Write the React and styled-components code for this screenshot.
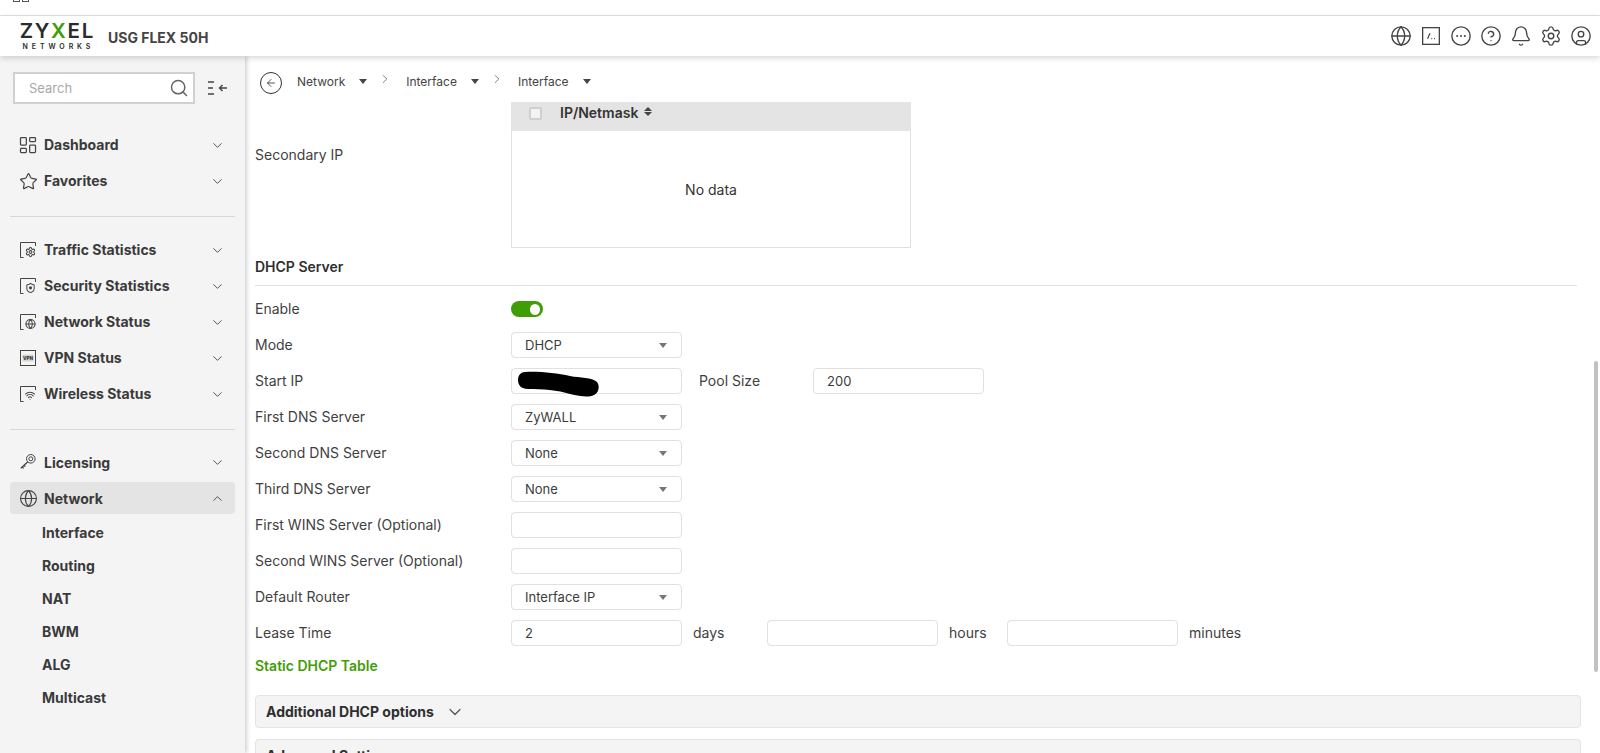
import React from "react";
import styled, { createGlobalStyle } from "styled-components";
import {
  Globe, CircleHelp, Bell, Settings, CircleUser, Search, LayoutDashboard, Star,
  ChevronDown, ChevronUp, ChevronRight, Shield, Wifi, ArrowLeft,
} from "lucide-react";

const GlobalStyle = createGlobalStyle`
  html, body { margin: 0; padding: 0; height: 100%; overflow: hidden; }
  body { font-family: Inter, "Liberation Sans", sans-serif; background: #fff; color: #3c3c3c; }
`;

const Page = styled.div`
  width: 1600px;
  height: 753px;
  display: flex;
  flex-direction: column;
  overflow: hidden;
`;

const TopStrip = styled.div`
  height: 15px;
  flex: none;
  display: flex;
  gap: 2px;
  padding-left: 13px;
  border-bottom: 1px solid #e3e3e3;
`;

const StripMark = styled.span`
  width: 5px;
  height: 1px;
  border: 1px solid #555;
  border-top: none;
`;

const Header = styled.header`
  height: 40px;
  flex: none;
  display: flex;
  align-items: center;
  justify-content: space-between;
  padding: 0 8px 0 20px;
  background: #fff;
  box-shadow: 0 2px 6px rgba(0, 0, 0, 0.16);
  position: relative;
  z-index: 2;
`;

const Brand = styled.div`
  display: flex;
  align-items: center;
  gap: 15px;
`;

const Logo = styled.div`
  width: 73px;
  display: flex;
  flex-direction: column;
  align-items: center;
`;

const LogoWord = styled.div`
  font-size: 20.5px;
  line-height: 18px;
  font-weight: 600;
  letter-spacing: 1.7px;
  color: #2b2b2b;
  margin-right: -1.7px;
  span { color: #3f9e06; }
`;

const LogoSub = styled.div`
  font-size: 7px;
  line-height: 8px;
  font-weight: 600;
  letter-spacing: 3.9px;
  color: #2b2b2b;
  margin-top: 3px;
  margin-bottom: -1px;
  margin-right: -3.9px;
`;

const ModelName = styled.div`
  font-size: 14px;
  font-weight: 700;
  color: #444;
  margin-top: 3px;
`;

const HeaderIcons = styled.div`
  display: flex;
  align-items: center;
  gap: 8px;
  color: #444;
`;

const Body = styled.div`
  flex: 1;
  min-height: 0;
  display: flex;
`;

const Sidebar = styled.aside`
  width: 245px;
  flex: none;
  background: #f4f4f4;
  box-shadow: 2px 0 4px rgba(0, 0, 0, 0.18);
  padding: 16px 10px 0;
  box-sizing: border-box;
  position: relative;
  z-index: 1;
`;

const SearchRow = styled.div`
  display: flex;
  align-items: center;
  gap: 13px;
  padding-left: 3px;
  margin-bottom: 25px;
  color: #444;
`;

const SearchBox = styled.div`
  width: 182px;
  height: 32px;
  box-sizing: border-box;
  border: 2px solid #d0d0d0;
  background: #fff;
  display: flex;
  align-items: center;
  justify-content: space-between;
  padding: 0 4px 0 14px;
  font-size: 13px;
  color: #a8a8a8;
`;

const NavGroup = styled.div`
  display: flex;
  flex-direction: column;
  gap: 4px;
`;

const NavRow = styled.div`
  height: 32px;
  display: flex;
  align-items: center;
  gap: 8px;
  padding: 0 10px;
  border-radius: 4px;
  font-size: 14px;
  font-weight: 700;
  color: #3a3a3a;
  background: ${(p) => (p.$active ? "#e4e4e4" : "transparent")};
  svg.chev { margin-left: auto; color: #555; }
`;

const NavIcon = styled.span`
  width: 16px;
  height: 16px;
  flex: none;
  display: flex;
  align-items: center;
  justify-content: center;
  color: #444;
  svg { flex: none; }
`;

const NavLabel = styled.span`
  line-height: 18px;
  margin-top: ${(p) => (p.$drop ? 2 : 0)}px;
`;

const Divider = styled.hr`
  margin: 19px 0 ${(p) => p.$after}px;
  border: none;
  border-top: 1px solid #d8d8d8;
`;

const SubList = styled.div`
  display: flex;
  flex-direction: column;
  margin-top: 2px;
`;

const SubItem = styled.div`
  height: 33px;
  line-height: 33px;
  padding-left: 32px;
  font-size: 14px;
  font-weight: 700;
  color: #3a3a3a;
`;

const Main = styled.main`
  flex: 1;
  min-width: 0;
  position: relative;
  display: flex;
  flex-direction: column;
  padding-left: 10px;
`;

const Crumbs = styled.div`
  height: 46px;
  flex: none;
  box-sizing: border-box;
  display: flex;
  align-items: center;
  padding: 5px 0 0 5px;
  font-size: 12px;
  color: #444;
`;

const BackButton = styled.div`
  width: 22px;
  height: 22px;
  box-sizing: border-box;
  border: 1px solid #333;
  border-radius: 50%;
  display: flex;
  align-items: center;
  justify-content: center;
  margin-right: 15px;
  margin-top: 2px;
`;

const Crumb = styled.div`
  display: flex;
  align-items: center;
  gap: 14px;
`;

const CrumbSep = styled.div`
  display: flex;
  width: 39px;
  box-sizing: border-box;
  padding-left: 11px;
  color: #555;
  margin-top: -6px;
`;

const Caret = styled.span`
  width: 0;
  height: 0;
  border-left: 4px solid transparent;
  border-right: 4px solid transparent;
  border-top: 5px solid ${(p) => p.$color || "#444"};
`;

const Scroll = styled.div`
  flex: 1;
  min-height: 0;
  overflow: hidden;
  padding-right: 19px;
`;

const Row = styled.div`
  display: flex;
  align-items: center;
  height: 26px;
  margin-bottom: 10px;
`;

const TableRow = styled.div`
  display: flex;
  align-items: flex-start;
`;

const Label = styled.div`
  width: 256px;
  flex: none;
  font-size: 14px;
  line-height: 18px;
  color: #3f3f3f;
  margin-top: ${(p) => p.$top || 0}px;
`;

const TableBox = styled.div`
  width: 400px;
  box-sizing: border-box;
`;

const TableHead = styled.div`
  height: 29px;
  background: #e4e4e4;
  display: flex;
  align-items: flex-start;
  padding: 5px 0 0 18px;
  box-sizing: border-box;
  font-size: 14px;
  font-weight: 600;
  line-height: 11px;
  color: #333;
`;

const Check = styled.span`
  width: 13px;
  height: 13px;
  box-sizing: border-box;
  border: 2px solid #cfcfcf;
  border-radius: 2px;
  background: #f3f3f3;
  margin-right: 18px;
`;

const SortMark = styled.span`
  display: flex;
  flex-direction: column;
  gap: 1px;
  margin-left: 6px;
  &::before, &::after {
    content: "";
    border-left: 4px solid transparent;
    border-right: 4px solid transparent;
  }
  &::before { border-bottom: 4px solid #444; }
  &::after { border-top: 4px solid #444; }
`;

const TableEmpty = styled.div`
  height: 117px;
  box-sizing: border-box;
  border: 1px solid #e0e0e0;
  border-top: none;
  display: flex;
  align-items: center;
  justify-content: center;
  font-size: 14px;
  color: #333;
`;

const SectionTitle = styled.div`
  font-size: 14px;
  font-weight: 600;
  line-height: 18px;
  color: #2f2f2f;
  margin-top: 10px;
  padding-bottom: 9px;
  border-bottom: 1px solid #e0e0e0;
  margin-bottom: 10px;
  margin-right: 4px;
`;

const Toggle = styled.span`
  width: 32px;
  height: 16px;
  border-radius: 8px;
  background: #3f9e06;
  display: flex;
  align-items: center;
  justify-content: flex-end;
  padding-right: 3px;
  box-sizing: border-box;
  &::after {
    content: "";
    width: 10px;
    height: 11px;
    border-radius: 50%;
    background: #fff;
  }
`;

const Field = styled.div`
  width: 171px;
  height: 26px;
  flex: none;
  box-sizing: border-box;
  border: 1px solid #e0e0e0;
  border-radius: 4px;
  background: #fff;
  display: flex;
  align-items: center;
  justify-content: space-between;
  padding: 0 14px 0 13px;
  font-size: 13px;
  color: #3c3c3c;
  position: relative;
`;

const Scribble = styled.svg`
  position: absolute;
  left: 6px;
  top: 2px;
`;

const Suffix = styled.span`
  font-size: 14px;
  line-height: 18px;
  color: #3f3f3f;
  width: ${(p) => p.$width}px;
  padding-left: ${(p) => p.$pad || 11}px;
  box-sizing: border-box;
  flex: none;
`;

const GreenLink = styled.div`
  font-size: 14px;
  font-weight: 600;
  line-height: 18px;
  color: #3f9e06;
  padding-top: 1px;
  margin-bottom: 20px;
`;

const Panel = styled.div`
  height: 33px;
  box-sizing: border-box;
  border: 1px solid #e4e4e4;
  border-radius: 4px;
  background: #f4f4f4;
  display: flex;
  align-items: center;
  gap: 11px;
  padding-left: 10px;
  font-size: 14px;
  font-weight: 700;
  color: #2f2f2f;
  margin-bottom: 11px;
`;

const ScrollThumb = styled.div`
  position: absolute;
  right: 2px;
  top: 305px;
  width: 4px;
  height: 311px;
  border-radius: 2px;
  background: #c1c1c1;
`;

// small framed icon used by the status entries, a corner of the frame stays open for the glyph
function FrameIcon({ children }) {
  return (
    <svg width="16" height="16" viewBox="0 0 16 16" fill="none" stroke="#444" strokeWidth="1">
      <path d="M3.5 15.5H.5V.5h15V4" />
      {children}
    </svg>
  );
}

const ConsoleIcon = () => (
  <svg width="22" height="22" viewBox="0 0 22 22" fill="none" stroke="#444">
    <rect x="2.65" y="2.65" width="16.7" height="16.7" strokeWidth="1.3" />
    <path d="M7.6 13.8 10 8.2" strokeWidth="1.2" />
    <path d="M11.3 13.6h.9M14 13.6h.9" strokeWidth="1.2" />
  </svg>
);

const DotsIcon = () => (
  <svg width="22" height="22" viewBox="0 0 24 24" fill="none" stroke="#444" strokeWidth="1.5">
    <circle cx="12" cy="12" r="10" />
    <circle cx="7.8" cy="12" r="1.1" fill="#444" stroke="none" />
    <circle cx="12" cy="12" r="1.1" fill="#444" stroke="none" />
    <circle cx="16.2" cy="12" r="1.1" fill="#444" stroke="none" />
  </svg>
);

const CollapseIcon = () => (
  <svg width="20" height="16" viewBox="0 0 20 16" fill="none" stroke="#444" strokeWidth="1.4">
    <path d="M0 2h6M0 8h5M0 14h6" />
    <path d="M19 8h-7.5M14.5 5l-3 3 3 3" />
  </svg>
);

const KeyIcon = () => (
  <svg width="16" height="16" viewBox="0 0 16 16" fill="none" stroke="#444" strokeWidth="1">
    <circle cx="10.8" cy="4.8" r="4.3" />
    <circle cx="10.8" cy="4.8" r="2" />
    <path d="M7.6 8 .8 14.2M2.2 12.9l1.5 1.5M4 11.3l1.3 1.3" strokeWidth="1.3" />
  </svg>
);

const VpnIcon = () => (
  <svg width="16" height="16" viewBox="0 0 16 16" fill="none">
    <rect x=".5" y=".5" width="15" height="15" stroke="#444" />
    <rect x="2.5" y="4.5" width="11" height="7" fill="#d6d6d6" />
    <text x="8" y="9.8" textAnchor="middle" fontSize="4.6" fontWeight="800" fill="#333" fontFamily="Inter, sans-serif">VPN</text>
  </svg>
);

const inner = { strokeWidth: 2.2 };
const head = { size: 22, strokeWidth: 1.5 };

const topNav = [
  { label: "Dashboard", icon: <LayoutDashboard size={20} strokeWidth={1.5} /> },
  { label: "Favorites", icon: <Star size={19} strokeWidth={1.5} /> },
];

const statusNav = [
  { label: "Traffic Statistics", icon: <FrameIcon><Settings x="5" y="4.5" width="11" height="11" {...inner} /></FrameIcon> },
  { label: "Security Statistics", icon: <FrameIcon><Shield x="5" y="4.5" width="11" height="11" {...inner} /><circle cx="10.5" cy="9.8" r="1.6" fill="#444" stroke="none" /></FrameIcon> },
  { label: "Network Status", icon: <FrameIcon><Globe x="5" y="4.5" width="11" height="11" {...inner} /></FrameIcon> },
  { label: "VPN Status", icon: <VpnIcon /> },
  { label: "Wireless Status", icon: <FrameIcon><Wifi x="4.5" y="4" width="11" height="11" {...inner} /></FrameIcon> },
];

const subItems = ["Interface", "Routing", "NAT", "BWM", "ALG", "Multicast"];

const dhcpRows = [
  { label: "First DNS Server", value: "ZyWALL" },
  { label: "Second DNS Server", value: "None" },
  { label: "Third DNS Server", value: "None" },
  { label: "First WINS Server (Optional)" },
  { label: "Second WINS Server (Optional)" },
  { label: "Default Router", value: "Interface IP" },
];

function NavItem({ item, active, drop }) {
  return (
    <NavRow $active={active}>
      <NavIcon>{item.icon}</NavIcon>
      <NavLabel $drop={drop}>{item.label}</NavLabel>
      {active
        ? <ChevronUp className="chev" size={15} strokeWidth={1.6} />
        : <ChevronDown className="chev" size={15} strokeWidth={1.6} />}
    </NavRow>
  );
}

function CrumbItem({ children }) {
  return (
    <Crumb>
      {children}
      <Caret />
    </Crumb>
  );
}

function SelectField({ value }) {
  return (
    <Field>
      {value}
      <Caret $color="#777" />
    </Field>
  );
}

export default function App() {
  return (
    <Page>
      <GlobalStyle />
      <TopStrip>
        <StripMark />
        <StripMark />
      </TopStrip>
      <Header>
        <Brand>
          <Logo>
            <LogoWord>ZY<span>X</span>EL</LogoWord>
            <LogoSub>NETWORKS</LogoSub>
          </Logo>
          <ModelName>USG FLEX 50H</ModelName>
        </Brand>
        <HeaderIcons>
          <Globe {...head} />
          <ConsoleIcon />
          <DotsIcon />
          <CircleHelp {...head} />
          <Bell {...head} />
          <Settings {...head} />
          <CircleUser {...head} />
        </HeaderIcons>
      </Header>
      <Body>
        <Sidebar>
          <SearchRow>
            <SearchBox>
              Search
              <Search size={20} strokeWidth={1.8} color="#666" />
            </SearchBox>
            <CollapseIcon />
          </SearchRow>
          <NavGroup>
            {topNav.map((item) => <NavItem key={item.label} item={item} />)}
          </NavGroup>
          <Divider $after={17} />
          <NavGroup>
            {statusNav.map((item) => <NavItem key={item.label} item={item} />)}
          </NavGroup>
          <Divider $after={16} />
          <NavGroup>
            <NavItem drop item={{ label: "Licensing", icon: <KeyIcon /> }} />
            <NavItem drop active item={{ label: "Network", icon: <Globe size={19} strokeWidth={1.4} /> }} />
          </NavGroup>
          <SubList>
            {subItems.map((name) => <SubItem key={name}>{name}</SubItem>)}
          </SubList>
        </Sidebar>
        <Main>
          <Crumbs>
            <BackButton><ArrowLeft size={12} strokeWidth={1.8} /></BackButton>
            <CrumbItem>Network</CrumbItem>
            <CrumbSep><ChevronRight size={14} strokeWidth={1.3} /></CrumbSep>
            <CrumbItem>Interface</CrumbItem>
            <CrumbSep><ChevronRight size={14} strokeWidth={1.3} /></CrumbSep>
            <CrumbItem>Interface</CrumbItem>
          </Crumbs>
          <Scroll>
            <TableRow>
              <Label $top={44}>Secondary IP</Label>
              <TableBox>
                <TableHead>
                  <Check />
                  IP/Netmask
                  <SortMark />
                </TableHead>
                <TableEmpty>No data</TableEmpty>
              </TableBox>
            </TableRow>
            <SectionTitle>DHCP Server</SectionTitle>
            <Row>
              <Label>Enable</Label>
              <Toggle />
            </Row>
            <Row>
              <Label>Mode</Label>
              <SelectField value="DHCP" />
            </Row>
            <Row>
              <Label>Start IP</Label>
              <Field>
                <Scribble width="82" height="26" viewBox="0 0 82 26">
                  <path d="M7 1C20 0 38 2 52 5c10 2 22 1 27 6 3 4 2 11-3 13-6 3-14 1-24-1C40 19 24 18 10 18 3 18 0 14 0 9 0 4 3 1 7 1Z" fill="#000" />
                </Scribble>
              </Field>
              <Suffix $width={131} $pad={17}>Pool Size</Suffix>
              <Field>200</Field>
            </Row>
            {dhcpRows.map((row) => (
              <Row key={row.label}>
                <Label>{row.label}</Label>
                {row.value ? <SelectField value={row.value} /> : <Field />}
              </Row>
            ))}
            <Row>
              <Label>Lease Time</Label>
              <Field>2</Field>
              <Suffix $width={85}>days</Suffix>
              <Field />
              <Suffix $width={69}>hours</Suffix>
              <Field />
              <Suffix $width={80}>minutes</Suffix>
            </Row>
            <GreenLink>Static DHCP Table</GreenLink>
            <Panel>
              Additional DHCP options
              <ChevronDown size={20} strokeWidth={1.5} color="#555" />
            </Panel>
            <Panel>Advanced Settings</Panel>
          </Scroll>
          <ScrollThumb />
        </Main>
      </Body>
    </Page>
  );
}
